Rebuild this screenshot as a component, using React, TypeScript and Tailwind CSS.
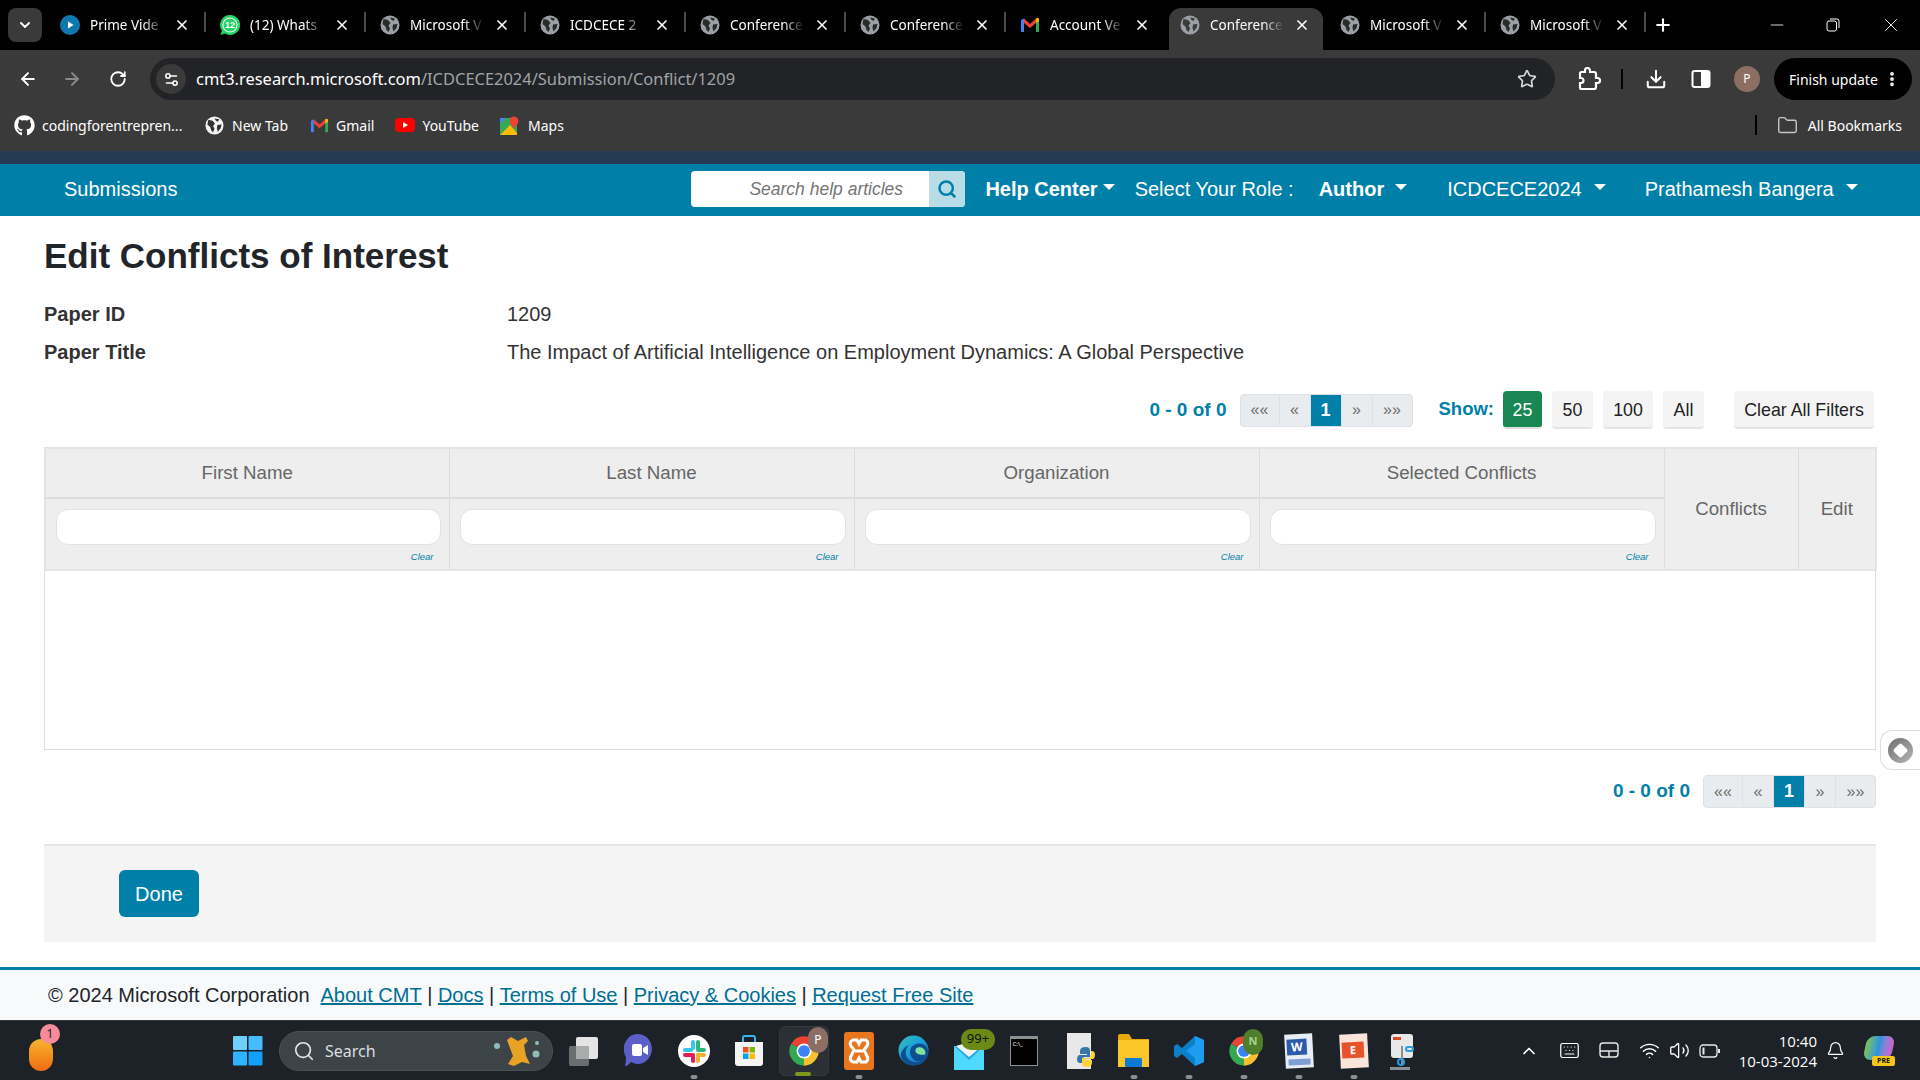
import { useId, type ReactNode } from 'react'
import {
  ArrowLeft,
  ArrowRight,
  RotateCw,
  Star,
  Download,
  ChevronDown,
  ChevronUp,
  Plus,
  X,
  Minus,
  Search,
  Folder,
  MoreVertical,
  Settings2,
  Wifi,
  Volume2,
  Bell,
  Keyboard,
} from 'lucide-react'
import { FaGithub } from 'react-icons/fa'

function Globe({ size = 20, base = '#9aa0a6', land = '#2b2b2b' }: { size?: number; base?: string; land?: string }) {
  return (
    <svg width={size} height={size} viewBox="0 0 20 20" className="shrink-0">
      <circle cx="10" cy="10" r="9.5" fill={base} />
      <path d="M3.5 4 L8 5 L10.5 8 L8.5 10.5 L10 13.5 L8.5 17 L6.5 15 L5.5 11.5 L2.5 9 Z" fill={land} />
      <path d="M10 2.5 L15 3.5 L13.5 6 L11.5 5 Z M13 9.5 L17.5 9 L16.5 13 L13.5 16.5 L12.5 13 Z" fill={land} />
    </svg>
  )
}

function Gmail({ size = 20 }: { size?: number }) {
  return (
    <svg width={size} height={size} viewBox="0 0 20 20" className="shrink-0">
      <path d="M1 5 L4 3.5 L4 17 L2 17 Q1 17 1 16 Z" fill="#4285f4" />
      <path d="M16 3.5 L19 5 L19 16 Q19 17 18 17 L16 17 Z" fill="#34a853" />
      <path d="M4 3.5 L10 9 L16 3.5 L16 8 L10 13 L4 8 Z" fill="#ea4335" />
      <path d="M16 3.5 Q18 2 19 4 L19 6 L16 8 Z" fill="#fbbc04" />
    </svg>
  )
}

function PrimeIcon() {
  return (
    <svg width="20" height="20" viewBox="0 0 20 20" className="shrink-0">
      <circle cx="10" cy="10" r="10" fill="#0f79af" />
      <path d="M8 6.5 L13.5 10 L8 13.5 Z" fill="#fff" />
    </svg>
  )
}

function WhatsappIcon() {
  return (
    <svg width="20" height="20" viewBox="0 0 20 20" className="shrink-0">
      <path d="M10 0 A10 10 0 1 1 5 18.6 L0.5 20 L1.8 15.5 A10 10 0 0 1 10 0 Z" fill="#25d366" />
      <circle cx="10" cy="10" r="7.6" fill="#fff" />
      <circle cx="10" cy="10" r="6.6" fill="#25d366" />
      <text x="10" y="13" textAnchor="middle" fontSize="9" fontWeight="700" fill="#fff" fontFamily="Liberation Sans">12</text>
    </svg>
  )
}

function ChromeLogo({ size = 30 }: { size?: number }) {
  return (
    <svg width={size} height={size} viewBox="0 0 24 24" className="shrink-0">
      <path d="M12 12 L2.47 6.5 A11 11 0 0 1 21.53 6.5 Z" fill="#ea4335" />
      <path d="M12 12 L21.53 6.5 A11 11 0 0 1 12 23 Z" fill="#fbc02d" />
      <path d="M12 12 L12 23 A11 11 0 0 1 2.47 6.5 Z" fill="#34a853" />
      <circle cx="12" cy="12" r="5.6" fill="#fff" />
      <circle cx="12" cy="12" r="4.4" fill="#3b82f6" />
    </svg>
  )
}

const tabs = [
  { title: 'Prime Vide', icon: <PrimeIcon /> },
  { title: '(12) Whats', icon: <WhatsappIcon /> },
  { title: 'Microsoft V', icon: <Globe /> },
  { title: 'ICDCECE 2', icon: <Globe /> },
  { title: 'Conference', icon: <Globe /> },
  { title: 'Conference', icon: <Globe /> },
  { title: 'Account Ve', icon: <Gmail /> },
  { title: 'Conference', icon: <Globe land="#3a3a3a" />, active: true },
  { title: 'Microsoft V', icon: <Globe /> },
  { title: 'Microsoft V', icon: <Globe /> },
]

function TabStrip() {
  return (
    <div className="h-[50px] bg-black flex text-white font-['Noto_Sans',sans-serif] text-[13.5px]">
      <div className="w-[46px] shrink-0 pl-[8px] pt-[8px]">
        <div className="w-[34px] h-[34px] rounded-lg bg-[#3a3a3a] flex items-center justify-center">
          <ChevronDown size={16} strokeWidth={3} />
        </div>
      </div>
      {tabs.map((t, i) => {
        const hideSep = t.active || tabs[i + 1]?.active
        return (
          <div
            key={i}
            className={`shrink-0 flex items-center relative mt-[8px] h-[42px] pb-[8px] ${
              t.active ? 'bg-[#3a3a3a] rounded-t-xl w-[154px] mx-[3px] pl-[11px]' : 'w-[160px] pl-[14px]'
            }`}
          >
            {t.icon}
            <span className="ml-[10px] w-[74px] overflow-hidden whitespace-nowrap [mask-image:linear-gradient(to_right,black_72%,transparent)]">
              {t.title}
            </span>
            <X size={16} strokeWidth={2.5} className="ml-[10px]" />
            {!hideSep && <span className="absolute right-0 top-[4px] w-[2px] h-[20px] bg-[#4a4a4a]" />}
          </div>
        )
      })}
      <div className="w-[44px] flex items-center justify-center">
        <Plus size={20} strokeWidth={2.5} className="ml-[-10px]" />
      </div>
      <div className="flex-1" />
      <div className="flex items-center pr-[18px]">
        <Minus size={20} strokeWidth={1} />
        <svg width="14" height="14" viewBox="0 0 14 14" fill="none" stroke="#fff" strokeWidth="1" className="ml-[39px]">
          <rect x="1" y="3" width="9.5" height="10" rx="2" />
          <path d="M4 1 H11 Q13 1 13 3 V10" />
        </svg>
        <X size={22} strokeWidth={1} className="ml-[40px]" />
      </div>
    </div>
  )
}

function Toolbar() {
  return (
    <div className="h-[50px] bg-[#3a3a3a] flex items-center pt-[8px] pb-0 font-['Noto_Sans',sans-serif] text-white">
      <div className="w-[150px] flex items-center pl-[18px] gap-[24px] shrink-0">
        <ArrowLeft size={20} strokeWidth={2.4} />
        <ArrowRight size={20} strokeWidth={2.4} className="text-[#8a8a8a]" />
        <RotateCw size={18} strokeWidth={2.4} className="ml-[3px]" />
      </div>
      <div className="w-[1405px] h-[42px] bg-[#212327] rounded-full flex items-center pl-[6px] pr-[18px] shrink-0">
        <div className="w-[30px] h-[30px] rounded-full bg-[#3a3a3a] flex items-center justify-center">
          <Settings2 size={17} strokeWidth={2.2} />
        </div>
        <span className="ml-[10px] mt-[1px] text-[16.45px]">
          cmt3.research.microsoft.com<span className="text-[#a0a4a8]">/ICDCECE2024/Submission/Conflict/1209</span>
        </span>
        <Star size={20} strokeWidth={2} className="ml-auto text-[#d5d7da]" />
      </div>
      <svg width="24" height="24" viewBox="0 0 24 24" fill="none" stroke="#fff" strokeWidth="2.2" className="ml-[22px]">
        <path d="M20.5 11H19V7a2 2 0 0 0-2-2h-4V3.5a2.5 2.5 0 0 0-5 0V5H4.5a1.5 1.5 0 0 0-1.5 1.5V11h1a2.5 2.5 0 0 1 0 5H3v4.5A1.5 1.5 0 0 0 4.5 22H17a2 2 0 0 0 2-2v-4h1.5a2.5 2.5 0 0 0 0-5z" />
      </svg>
      <span className="ml-[20px] w-[2px] h-[20px] bg-black" />
      <Download size={22} strokeWidth={2.2} className="ml-[22px]" />
      <svg width="20" height="20" viewBox="0 0 20 20" className="ml-[24px]">
        <rect x="1.5" y="2" width="17" height="16" rx="2" fill="none" stroke="#fff" strokeWidth="2" />
        <rect x="10" y="2" width="9" height="16" rx="1" fill="#fff" />
      </svg>
      <div className="ml-[23px] w-[26px] h-[26px] rounded-full bg-[#8d6e63] flex items-center justify-center text-[12px]">P</div>
      <div className="ml-[14px] w-[138px] h-[42px] rounded-full bg-black flex items-center pl-[15px] text-[14px]">
        Finish update
        <MoreVertical size={18} strokeWidth={3} className="ml-[5px]" />
      </div>
    </div>
  )
}

function BookmarksBar() {
  return (
    <div className="h-[51px] bg-[#3a3a3a] flex items-center pl-[14px] pb-[1px] text-white text-[14px] font-['Noto_Sans',sans-serif]">
      <FaGithub size={21} />
      <span className="ml-[7px] w-[142px] whitespace-nowrap">codingforentrepren...</span>
      <span className="ml-[21px]">
        <Globe size={19} base="#f1f3f4" land="#333" />
      </span>
      <span className="ml-[8px] whitespace-nowrap">New Tab</span>
      <span className="ml-[22px]">
        <Gmail size={19} />
      </span>
      <span className="ml-[7px]">Gmail</span>
      <svg width="20" height="14" viewBox="0 0 20 14" className="ml-[21px]">
        <rect width="20" height="14" rx="4" fill="#f00" />
        <path d="M8 4 L13 7 L8 10 Z" fill="#fff" />
      </svg>
      <span className="ml-[7px]">YouTube</span>
      <svg width="19" height="19" viewBox="0 0 19 19" className="ml-[21px]">
        <rect y="2" width="17" height="17" fill="#34a853" />
        <path d="M0 19 L10 9 L17 17 L17 19 Z" fill="#fbbc04" />
        <path d="M0 2 H6 L0 8 Z" fill="#4285f4" />
        <circle cx="14" cy="5" r="4.5" fill="#ea4335" />
        <path d="M10.5 7.5 L14 13 L17.5 7.5 Z" fill="#ea4335" />
      </svg>
      <span className="ml-[9px]">Maps</span>
      <span className="ml-auto w-[2px] h-[20px] bg-black" />
      <Folder size={21} strokeWidth={1.6} className="ml-[20px] text-[#c4c7c5]" />
      <span className="ml-[10px] mr-[18px]">All Bookmarks</span>
    </div>
  )
}

function Caret({ className = '' }: { className?: string }) {
  return <span className={`inline-block w-0 h-0 border-x-[6px] border-x-transparent border-t-[6px] border-t-white ${className}`} />
}

function Navbar() {
  return (
    <nav className="h-[52px] bg-[#0080a8] flex items-center pl-[64px] pb-[2px] text-white text-[20px]">
      <span>Submissions</span>
      <div className="ml-[514px] w-[274px] h-[36px] rounded-[4px] bg-white flex overflow-hidden">
        <span className="w-[238px] pl-[58px] italic text-[17.5px] leading-[36px] text-[#757575]">Search help articles</span>
        <span className="w-[36px] bg-[#b9dde8] flex items-center justify-center">
          <Search size={20} strokeWidth={3} className="text-[#0080a8]" />
        </span>
      </div>
      <span className="ml-[20px] font-bold">Help Center</span>
      <Caret className="ml-[5px] mt-[-4px]" />
      <span className="ml-[20px]">Select Your Role :</span>
      <span className="ml-[25px] font-bold">Author</span>
      <Caret className="ml-[11px] mt-[-4px]" />
      <span className="ml-[40px]">ICDCECE2024</span>
      <Caret className="ml-[12px] mt-[-4px]" />
      <span className="ml-[39px]">Prathamesh Bangera</span>
      <Caret className="ml-[12px] mt-[-4px]" />
    </nav>
  )
}

function Pager() {
  const cells = [
    { label: '««', w: 'w-[39px]' },
    { label: '«', w: 'w-[31px]' },
    { label: '1', w: 'w-[31px]', active: true },
    { label: '»', w: 'w-[31px]' },
    { label: '»»', w: 'w-[39px]' },
  ]
  return (
    <div className="flex items-center">
      <span className="text-[19px] font-bold text-[#0080a8]">0 - 0 of 0</span>
      <div className="ml-[13px] h-[33px] flex rounded-[4px] overflow-hidden border border-[#dee2e6] bg-[#e9ecef]">
        {cells.map((c) => (
          <span
            key={c.label}
            className={`${c.w} flex items-center justify-center border-r border-[#dee2e6] last:border-r-0 ${
              c.active ? 'bg-[#0080a8] text-white font-bold text-[18px]' : 'text-[#6c6c6c] text-[16px]'
            }`}
          >
            {c.label}
          </span>
        ))}
      </div>
    </div>
  )
}

function ShowButton({ children, w, active }: { children: ReactNode; w: string; active?: boolean }) {
  return (
    <span
      className={`${w} h-[38px] rounded-[4px] flex items-center justify-center pt-[2px] text-[17.8px] border-b-2 ${
        active ? 'bg-[#198754] border-[#e0e0e0] text-white' : 'bg-[#f4f4f4] border-[#e4e4e4] text-[#222]'
      }`}
    >
      {children}
    </span>
  )
}

function FilterCell() {
  return (
    <td className="border border-[#dddddd] border-t-2 pl-[10px] pr-[8px] pt-[10px] pb-0 align-top">
      <div className="h-[36px] bg-white rounded-[12px] border border-[#e2e2e2]" />
      <div className="text-right text-[9.5px] italic text-[#0080a8] leading-[12px] mt-[6px] mb-[6px] mr-[7px]">Clear</div>
    </td>
  )
}

function ConflictsTable() {
  return (
    <div className="mt-[18px]">
      <table className="w-[1831px] table-fixed border-collapse bg-[#eeeeee] text-[18.7px] text-[#666666] border-2 border-[#e4e4e4]">
        <colgroup>
          <col className="w-[404px]" />
          <col className="w-[405px]" />
          <col className="w-[405px]" />
          <col className="w-[405px]" />
          <col className="w-[134px]" />
          <col className="w-[78px]" />
        </colgroup>
        <thead>
          <tr className="h-[50px]">
            {['First Name', 'Last Name', 'Organization', 'Selected Conflicts'].map((h) => (
              <th key={h} className="font-normal border border-[#dddddd]">{h}</th>
            ))}
            <th rowSpan={2} className="font-normal border border-[#dddddd]">Conflicts</th>
            <th rowSpan={2} className="font-normal border border-[#dddddd]">Edit</th>
          </tr>
          <tr>
            <FilterCell />
            <FilterCell />
            <FilterCell />
            <FilterCell />
          </tr>
        </thead>
      </table>
      <div className="h-[179px] border border-t-0 border-[#dedede]" />
    </div>
  )
}

function Page() {
  return (
    <main className="flex-1 px-[44px] text-[#212529] relative">
      <h1 className="text-[35px] font-bold leading-[40px] mt-[20px]">Edit Conflicts of Interest</h1>
      <div className="flex text-[20px] mt-[24px] leading-[28px]">
        <span className="w-[463px] font-bold text-[#333]">Paper ID</span>
        <span className="text-[#333]">1209</span>
      </div>
      <div className="flex text-[20px] mt-[10px] leading-[28px]">
        <span className="w-[463px] font-bold text-[#333]">Paper Title</span>
        <span className="text-[#333]">The Impact of Artificial Intelligence on Employment Dynamics: A Global Perspective</span>
      </div>
      <div className="flex justify-end items-center mt-[25px] pr-[2px] h-[38px]">
        <Pager />
        <span className="ml-[26px] text-[18.5px] font-bold text-[#0080a8] mt-[-3px]">Show:</span>
        <div className="ml-[9px] flex gap-[10px]">
          <ShowButton w="w-[39px]" active>25</ShowButton>
          <ShowButton w="w-[41px]">50</ShowButton>
          <ShowButton w="w-[50px]">100</ShowButton>
          <ShowButton w="w-[41px]">All</ShowButton>
        </div>
        <div className="ml-[30px]">
          <ShowButton w="w-[140px]">Clear All Filters</ShowButton>
        </div>
      </div>
      <ConflictsTable />
      <div className="flex justify-end mt-[25px]">
        <Pager />
      </div>
      <div className="mt-[36px] h-[98px] bg-[#f4f4f4] border-t-2 border-[#e6e6e6] pl-[75px] pt-[24px]">
        <button className="w-[80px] h-[47px] rounded-[6px] bg-[#0080a8] text-white text-[20px]">Done</button>
      </div>
      {/* floating side widget */}
      <div className="absolute right-0 top-[514px] w-[40px] h-[40px] bg-white rounded-l-xl border border-r-0 border-[#dddddd] flex items-center justify-center">
        <div className="w-[25px] h-[25px] rounded-full bg-gradient-to-br from-[#6e6e6e] to-[#b5b5b5] flex items-center justify-center">
          <div className="w-[11px] h-[11px] bg-white rotate-45 rounded-[2px]" />
        </div>
      </div>
    </main>
  )
}

function Footer() {
  const link = 'text-[#006f94] underline'
  return (
    <footer className="h-[53px] border-t-[3px] border-[#0080a8] bg-[#f8f9fa] flex items-center pl-[48px] text-[20px] text-[#212529]">
      <span>© 2024 Microsoft Corporation</span>
      <span className={`${link} ml-[11px]`}>About CMT</span>
      <span className="mx-[5.5px]">|</span>
      <span className={link}>Docs</span>
      <span className="mx-[5.5px]">|</span>
      <span className={link}>Terms of Use</span>
      <span className="mx-[5.5px]">|</span>
      <span className={link}>Privacy &amp; Cookies</span>
      <span className="mx-[5.5px]">|</span>
      <span className={link}>Request Free Site</span>
    </footer>
  )
}

function Slot({ children, dot, w = 'w-[55px]' }: { children: ReactNode; dot?: boolean; w?: string }) {
  return (
    <div className={`${w} h-[60px] shrink-0 flex items-center justify-center relative`}>
      {children}
      {dot && <span className="absolute bottom-[2px] left-1/2 -translate-x-1/2 w-[7px] h-[4px] rounded-full bg-[#8a8f94]" />}
    </div>
  )
}

function Badge({ children, className }: { children: ReactNode; className: string }) {
  return <span className={`absolute flex items-center justify-center ${className}`}>{children}</span>
}

function EdgeLogo() {
  const id = useId()
  return (
    <svg width="31" height="31" viewBox="0 0 32 32">
      <defs>
        <linearGradient id={id} x1="0" y1="0" x2="1" y2="1">
          <stop offset="0" stopColor="#35c1b0" />
          <stop offset="0.5" stopColor="#1b9de2" />
          <stop offset="1" stopColor="#0c59a4" />
        </linearGradient>
      </defs>
      <circle cx="16" cy="16" r="15.5" fill={`url(#${id})`} />
      <path d="M31 17 C31 11 25 8 20 9 C14 10 11 15 13 21 C15 26 21 29 26 27 C18 30 8 27 8 18 C8 14 10 11 12 10 C6 12 2 18 3 23 C6 30 14 32 18 31 C26 31 31 24 31 17 Z" fill="#0f4f8f" />
      <path d="M18 16 C18 13 21 12 24 13 C27 14 29 17 28 20 C24 21 18 20 18 16 Z" fill="#7fe3a0" />
    </svg>
  )
}

function Taskbar() {
  return (
    <div className="h-[60px] bg-[#1c2228] border-t border-[#34383c] flex items-center relative text-white font-['Noto_Sans',sans-serif]">
      <div className="w-[221px] pl-[29px] shrink-0 relative">
        <div className="w-[24px] h-[32px] rounded-full bg-gradient-to-b from-[#f6b42c] to-[#ef6a10] mt-[8px]" />
        <Badge className="left-[40px] top-[-7px] w-[20px] h-[20px] rounded-full bg-[#f68b9a] text-[#222] text-[12px]">1</Badge>
      </div>
      <svg width="30" height="30" viewBox="0 0 30 30" className="shrink-0 mr-[16px] ml-[12px]">
        <rect width="14" height="14" rx="1" fill="#6fd0ff" />
        <rect x="15.5" width="14" height="14" rx="1" fill="#46bcff" />
        <rect y="15.5" width="14" height="14" rx="1" fill="#2fb2ff" />
        <rect x="15.5" y="15.5" width="14" height="14" rx="1" fill="#11a0fc" />
      </svg>
      <div className="w-[274px] h-[40px] rounded-full bg-[#3c4448] border border-[#4a5054] flex items-center pl-[13px] mr-[3px] shrink-0 relative">
        <Search size={22} strokeWidth={1.8} className="text-[#e8e8e8]" />
        <span className="ml-[10px] text-[16px] text-[#dddddd]">Search</span>
        <svg width="50" height="38" viewBox="0 0 50 38" className="absolute right-[10px] top-0">
          <path d="M15 8 L19 5 L26 9 L34 5 L36 9 L32 13 L34 24 L38 32 L30 30 L22 34 L16 32 L21 24 Z" fill="#e9a324" />
          <circle cx="5" cy="14" r="3" fill="#8fbcb8" />
          <circle cx="44" cy="22" r="3.5" fill="#8fbcb8" />
          <circle cx="45" cy="11" r="2" fill="#8fbcb8" />
        </svg>
      </div>
      <Slot>
        <svg width="30" height="30" viewBox="0 0 30 30" className="ml-[1px]">
          <rect x="0" y="10" width="20" height="20" rx="2" fill="#6b6e70" />
          <rect x="7" y="1" width="22" height="22" rx="2" fill="#e4e4e4" />
          <rect x="7" y="10" width="13" height="13" fill="#a9abad" />
        </svg>
      </Slot>
      <Slot>
        <svg width="30" height="36" viewBox="0 0 30 36">
          <path d="M15 1 A14 15 0 1 1 7 29 Q4 33 1 33 Q2 29 2 24 A14 15 0 0 1 15 1 Z" fill="#5b5fc7" />
          <rect x="8" y="11" width="10" height="12" rx="2" fill="#fff" />
          <path d="M19 15 L24 12 V22 L19 19 Z" fill="#fff" />
        </svg>
      </Slot>
      <Slot dot>
        <svg width="32" height="32" viewBox="0 0 32 32">
          <circle cx="16" cy="16" r="16" fill="#fff" />
          <rect x="13" y="5" width="4" height="10" rx="2" fill="#36c5f0" />
          <rect x="5" y="13" width="10" height="4" rx="2" fill="#36c5f0" />
          <rect x="18" y="5" width="4" height="10" rx="2" fill="#2eb67d" />
          <rect x="18" y="13" width="10" height="4" rx="2" fill="#2eb67d" />
          <rect x="18" y="18" width="4" height="10" rx="2" fill="#ecb22e" />
          <rect x="18" y="18" width="10" height="4" rx="2" fill="#ecb22e" />
          <rect x="13" y="18" width="4" height="10" rx="2" fill="#e01e5a" />
          <rect x="5" y="18" width="10" height="4" rx="2" fill="#e01e5a" />
        </svg>
      </Slot>
      <Slot>
        <svg width="30" height="32" viewBox="0 0 30 32">
          <path d="M9 7 V3 Q9 1 11 1 H19 Q21 1 21 3 V7" fill="none" stroke="#36b5ef" strokeWidth="2" />
          <path d="M1 7 H29 V28 Q29 31 26 31 H4 Q1 31 1 28 Z" fill="#f4f4f4" />
          <rect x="9" y="12" width="5.5" height="5.5" fill="#f25022" />
          <rect x="15.5" y="12" width="5.5" height="5.5" fill="#7fba00" />
          <rect x="9" y="18.5" width="5.5" height="5.5" fill="#00a4ef" />
          <rect x="15.5" y="18.5" width="5.5" height="5.5" fill="#ffb900" />
        </svg>
      </Slot>
      <Slot>
        <span className="absolute left-[3px] top-[5px] w-[50px] h-[50px] rounded-md bg-[#2a3036] border border-[#33393f]" />
        <span className="relative">
          <ChromeLogo size={32} />
        </span>
        <Badge className="right-[3px] top-[6px] w-[20px] h-[26px] rounded-full bg-[#8d6e63] text-[12px]">P</Badge>
        <span className="absolute bottom-[5px] left-[19px] w-[16px] h-[4px] rounded-sm bg-[#7c9a1e]" />
      </Slot>
      <Slot dot>
        <div className="w-[30px] h-[38px] rounded-[3px] bg-[#e8761f] flex items-center justify-center">
          <svg width="24" height="26" viewBox="0 0 24 26" fill="none" stroke="#fff" strokeWidth="3">
            <path d="M6 2 H10 L12 6 L14 2 H19 Q22 4 20 8 L17 12 L20 18 Q22 22 19 24 H14 L12 20 L10 24 H6 Q2 22 4 18 L7 12 L4 8 Q2 4 6 2 Z" />
            <path d="M8 13 H16" />
          </svg>
        </div>
      </Slot>
      <Slot>
        <EdgeLogo />
      </Slot>
      <Slot>
        <svg width="30" height="28" viewBox="0 0 30 28" className="mt-[10px]">
          <rect x="0" y="4" width="30" height="24" fill="#28a8ea" />
          <path d="M0 4 L15 18 L30 4 L30 28 L0 28 Z" fill="#50d9ff" />
          <path d="M2 4 L15 0 L28 4 L15 15 Z" fill="#f2f2f2" />
        </svg>
        <Badge className="left-[20px] top-[8px] w-[34px] h-[21px] rounded-[10px] bg-[#6b8a14] text-[#111] text-[13px]">99+</Badge>
      </Slot>
      <Slot>
        <div className="w-[28px] h-[30px] bg-black border border-[#8a8f94] border-t-[3px] relative">
          <span className="absolute left-[2px] top-[1px] text-[6px] leading-[8px] text-white">C:\_</span>
        </div>
      </Slot>
      <Slot>
        <div className="relative w-[24px] h-[36px] bg-[#e8e8e8]">
          <svg width="18" height="20" viewBox="0 0 18 20" className="absolute left-[10px] top-[14px]">
            <path d="M9 0 Q3 0 3 4 V7 H10 V8 H2 Q0 9 0 12 Q0 16 3 16 H5 V13 Q5 10 8 10 H13 V4 Q13 0 9 0 Z" fill="#3776ab" />
            <path d="M9 20 Q15 20 15 16 V13 H8 V12 H16 Q18 11 18 8 Q18 4 15 4 H14 V8 Q14 11 10 11 H5 V16 Q5 20 9 20 Z" fill="#ffd43b" />
          </svg>
        </div>
      </Slot>
      <Slot dot>
        <svg width="31" height="36" viewBox="0 0 31 36">
          <path d="M0 3 Q0 1 2 1 H11 L14 6 H31 V34 H0 Z" fill="#e8a80c" />
          <rect y="7" width="31" height="27" fill="#fcc72b" />
          <rect x="7" y="25" width="17" height="9" rx="1" fill="#0c7bd2" />
        </svg>
      </Slot>
      <Slot dot>
        <svg width="30" height="30" viewBox="0 0 30 30">
          <path d="M21 0 L30 4 V26 L21 30 L8 18 L3 22 L0 20 V10 L3 8 L8 12 Z" fill="#0b7fc7" />
          <path d="M21 0 L30 4 V26 L21 30 Z M21 8 L12 15 L21 22 Z" fill="#1f9cf0" fillRule="evenodd" />
        </svg>
      </Slot>
      <Slot dot>
        <ChromeLogo size={32} />
        <Badge className="right-[8px] top-[8px] w-[20px] h-[26px] rounded-full bg-[#4f7f2b] text-[#a6d28a] text-[11px] font-bold">N</Badge>
      </Slot>
      <Slot dot>
        <div className="relative w-[28px] h-[34px] bg-[#e8ecf4] -rotate-3">
          <span className="absolute left-[2px] top-[5px] w-[20px] h-[16px] bg-[#2a5caa] text-white text-[12px] font-bold leading-[16px] text-center">W</span>
          <span className="absolute left-[3px] bottom-[3px] w-[22px] h-[6px] bg-[#7e9fd6]" />
        </div>
      </Slot>
      <Slot dot>
        <div className="relative w-[28px] h-[34px] bg-[#fce4da] -rotate-3">
          <span className="absolute left-[2px] top-[8px] w-[22px] h-[16px] bg-[#e8532b] text-white text-[11px] font-bold leading-[16px] text-center">E</span>
        </div>
      </Slot>
      <Slot>
        <div className="relative w-[28px] h-[34px]">
          <div className="w-[22px] h-[24px] bg-[#e8e8e8] rounded-[3px] ml-[-4px]" />
          <span className="absolute left-[-2px] top-[3px] w-[8px] h-[3px] bg-[#d94a22]" />
          <span className="absolute left-[6px] top-[12px] w-[2px] h-[18px] bg-[#8a8f94]" />
          <span className="absolute left-[10px] top-[12px] w-[9px] h-[6px] rounded-full border-2 border-[#2b9ae0]" />
          <span className="absolute left-[2px] bottom-[2px] w-[8px] h-[8px] rounded-full border-2 border-[#2b9ae0]" />
          <span className="absolute left-[-5px] bottom-[-2px] w-[20px] h-[3px] bg-[#8a8f94]" />
        </div>
      </Slot>
      <div className="ml-auto flex items-center">
        <ChevronUp size={20} strokeWidth={2} />
        <Keyboard size={21} strokeWidth={1.4} className="ml-[20px]" />
        <svg width="20" height="18" viewBox="0 0 20 18" fill="none" stroke="#e8e8e8" strokeWidth="1.4" className="ml-[19px]">
          <rect x="1" y="1" width="18" height="14" rx="3" />
          <path d="M1 9 H19 M10 9 V15" />
        </svg>
        <Wifi size={21} strokeWidth={1.7} className="ml-[20px]" />
        <Volume2 size={21} strokeWidth={1.5} className="ml-[9px]" />
        <svg width="21" height="14" viewBox="0 0 21 14" fill="none" stroke="#e8e8e8" strokeWidth="1.3" className="ml-[9px]">
          <rect x="1" y="1" width="17" height="12" rx="3" />
          <rect x="3.5" y="3.5" width="2" height="7" fill="#e8e8e8" stroke="none" />
          <path d="M20 5 V9" strokeWidth="2" />
        </svg>
        <div className="ml-[19px] text-right text-[15px] leading-[20px] font-['Open_Sans',sans-serif]">
          <div>10:40</div>
          <div>10-03-2024</div>
        </div>
        <Bell size={19} strokeWidth={1.5} className="ml-[9px]" />
        <div className="ml-[20px] mr-[25px] w-[30px] h-[30px] relative">
          <div className="w-[28px] h-[24px] rounded-lg bg-gradient-to-r from-[#7ec24a] via-[#2e8fe0] to-[#d05ec6] -skew-x-12" />
          <span className="absolute left-[7px] bottom-0 w-[23px] h-[10px] rounded-[2px] bg-[#f5c518] text-[#111] text-[7px] leading-[10px] font-bold text-center">PRE</span>
        </div>
      </div>
    </div>
  )
}

export default function App() {
  return (
    <div className="w-[1920px] h-[1080px] flex flex-col overflow-hidden bg-white font-['Liberation_Sans',Arial,sans-serif]">
      <TabStrip />
      <Toolbar />
      <BookmarksBar />
      <div className="h-[13px] bg-[#243a55]" />
      <Navbar />
      <Page />
      <Footer />
      <Taskbar />
    </div>
  )
}
